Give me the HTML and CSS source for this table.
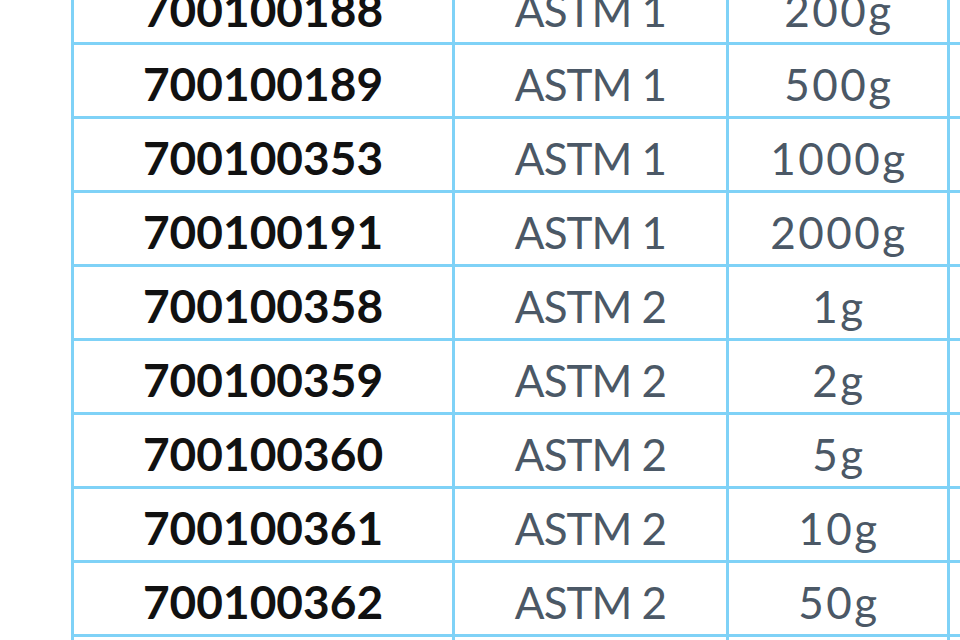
FILE: index.html
```html
<!DOCTYPE html>
<html>
<head>
<meta charset="utf-8">
<link rel="stylesheet" href="styles.css">
</head>
<body>
<div class="grid">
  <div class="cell code">700100188</div><div class="cell grade">ASTM 1</div><div class="cell mass">200g</div><div class="cell"></div>
  <div class="cell code">700100189</div><div class="cell grade">ASTM 1</div><div class="cell mass">500g</div><div class="cell"></div>
  <div class="cell code">700100353</div><div class="cell grade">ASTM 1</div><div class="cell mass">1000g</div><div class="cell"></div>
  <div class="cell code">700100191</div><div class="cell grade">ASTM 1</div><div class="cell mass">2000g</div><div class="cell"></div>
  <div class="cell code">700100358</div><div class="cell grade">ASTM 2</div><div class="cell mass">1g</div><div class="cell"></div>
  <div class="cell code">700100359</div><div class="cell grade">ASTM 2</div><div class="cell mass">2g</div><div class="cell"></div>
  <div class="cell code">700100360</div><div class="cell grade">ASTM 2</div><div class="cell mass">5g</div><div class="cell"></div>
  <div class="cell code">700100361</div><div class="cell grade">ASTM 2</div><div class="cell mass">10g</div><div class="cell"></div>
  <div class="cell code">700100362</div><div class="cell grade">ASTM 2</div><div class="cell mass">50g</div><div class="cell"></div>
  <div class="cell code">700100363</div><div class="cell grade">ASTM 2</div><div class="cell mass">100g</div><div class="cell"></div>
</div>
</body>
</html>
```
FILE: styles.css
```css
html, body {
  margin: 0;
  padding: 0;
  background: #ffffff;
  overflow: hidden;
}
body {
  width: 960px;
  height: 640px;
  font-family: "Lato", "Liberation Sans", sans-serif;
}
.grid {
  display: grid;
  grid-template-columns: 381px 274px 221px 200px;
  grid-auto-rows: 74px;
  margin-left: 71px;
  margin-top: -29px;
  border-left: 3px solid #7fd2f7;
  width: max-content;
}
.cell {
  box-sizing: border-box;
  border-right: 3px solid #7fd2f7;
  border-bottom: 3px solid #7fd2f7;
  display: flex;
  align-items: center;
  justify-content: center;
  font-size: 46px;
  line-height: 1;
  padding-top: 6px;
}
.code {
  font-weight: 700;
  color: #111111;
}
.grade,
.mass {
  font-size: 44px;
  font-weight: 400;
  color: #4b5866;
}
.grade {
  letter-spacing: -1px;
}
.mass {
  letter-spacing: 2.5px;
  padding-left: 2px;
}
```
